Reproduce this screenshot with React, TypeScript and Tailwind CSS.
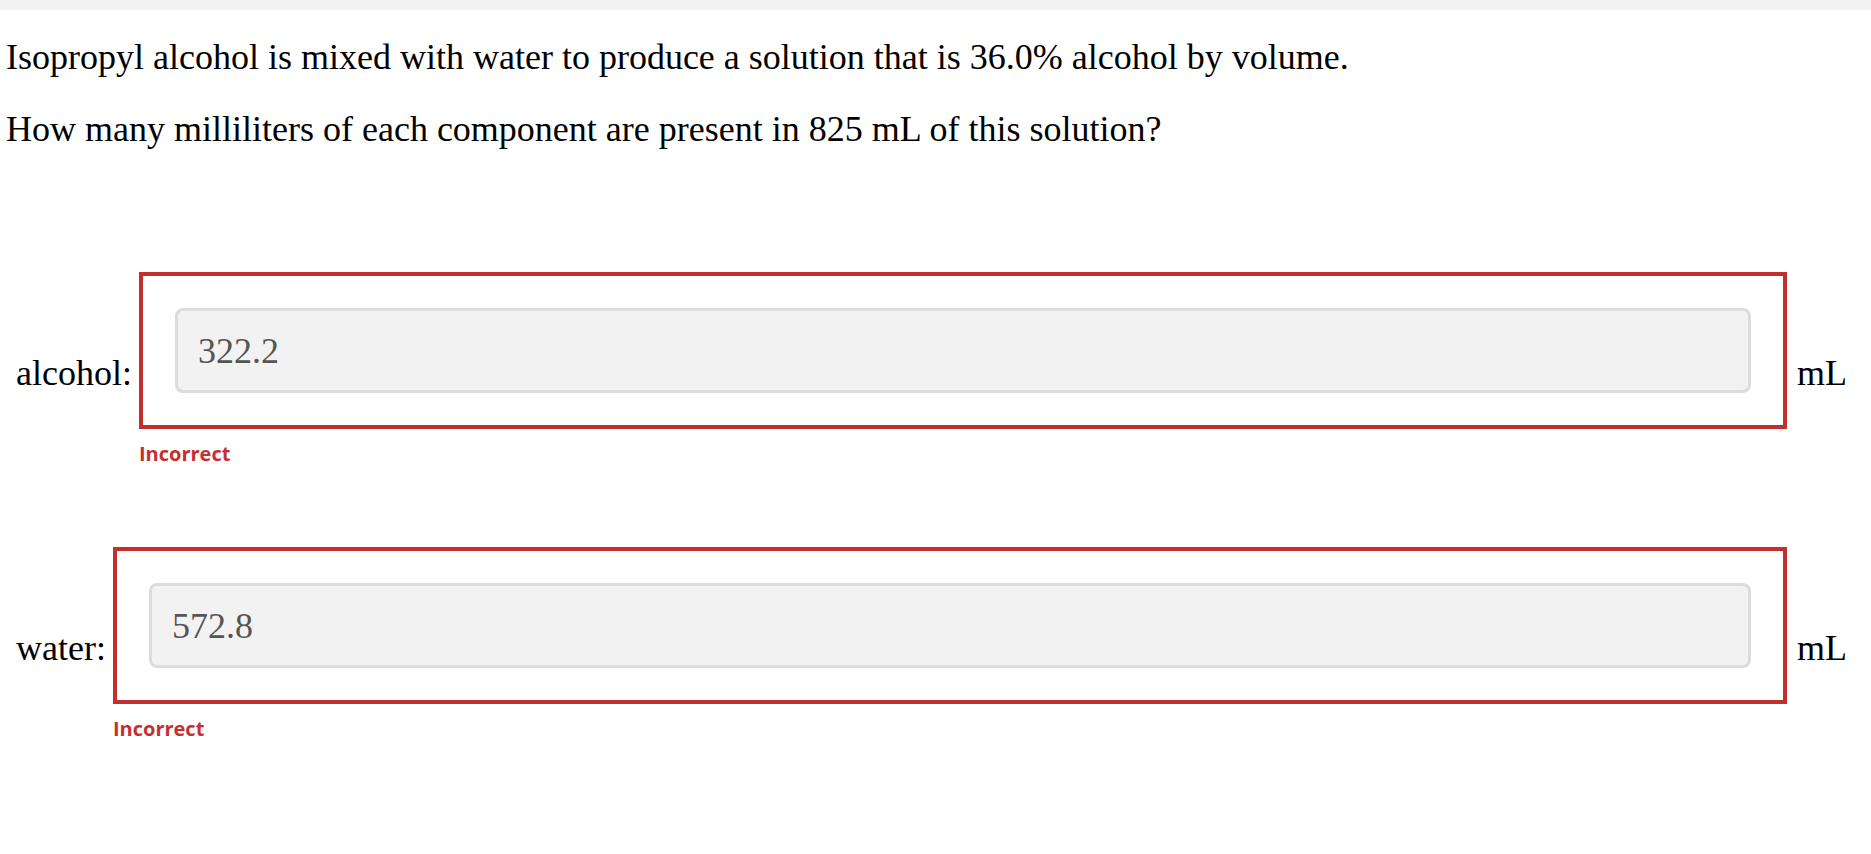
const serif = "font-['Liberation_Serif','Times_New_Roman',serif]";

function AnswerRow({ label, value }: { label: string; value: string }) {
  return (
    <div className="flex items-center">
      <span className="pr-[7px] text-[36px] leading-[42px] text-black">{label}</span>
      <div className="flex min-w-0 flex-1 flex-col">
        {/* red "wrong answer" frame */}
        <div className="border-4 border-[#c12f2f] p-8">
          <input
            readOnly
            value={value}
            className="block h-[85px] w-full rounded-lg border-[3px] border-[#dcdcdc] bg-[#f2f2f2] pl-5 text-[36px] text-[#555555] outline-none"
          />
        </div>
        <div className="pb-[6px] pt-[11px] font-['Open_Sans',sans-serif] text-[20px] font-bold leading-[28px] text-[#c43030]">
          Incorrect
        </div>
      </div>
      <span className="pl-[10px] text-[36px] leading-[42px] text-black">mL</span>
    </div>
  );
}

export default function App() {
  return (
    <div className={`min-h-screen bg-white ${serif}`}>
      <div className="h-[10px] bg-[#f2f2f2]" />

      <div className="px-[6px] pt-[26px] text-[36px] leading-[42px] text-black">
        <p>Isopropyl alcohol is mixed with water to produce a solution that is 36.0% alcohol by volume.</p>
        <p className="mt-[30px]">How many milliliters of each component are present in 825 mL of this solution?</p>
      </div>

      <div className="mt-[122px] flex flex-col gap-[73px] pl-4 pr-6">
        <AnswerRow label="alcohol:" value="322.2" />
        <AnswerRow label="water:" value="572.8" />
      </div>
    </div>
  );
}
